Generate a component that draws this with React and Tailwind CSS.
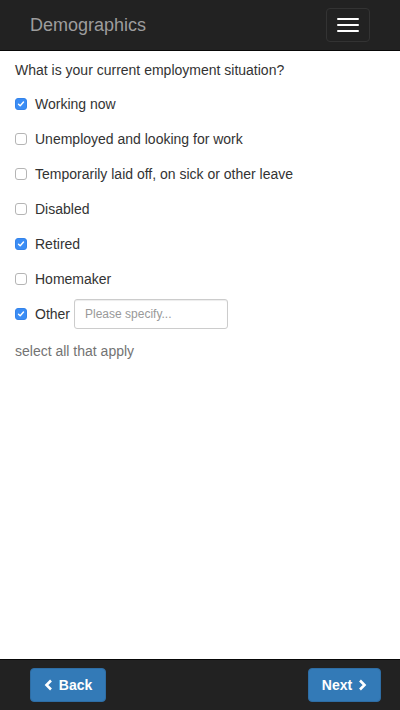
import React, { useState } from 'react';

const options = [
  { label: 'Working now', checked: true },
  { label: 'Unemployed and looking for work', checked: false },
  { label: 'Temporarily laid off, on sick or other leave', checked: false },
  { label: 'Disabled', checked: false },
  { label: 'Retired', checked: true },
  { label: 'Homemaker', checked: false },
];

const Box = ({ checked, onClick }) => (
  <span
    onClick={onClick}
    className={`w-[12px] h-[12px] rounded-[3px] flex items-center justify-center shrink-0 ${
      checked ? 'bg-[#3b8df5] border border-[#3483ea]' : 'bg-white border border-[#b5b5b5]'
    }`}
  >
    {checked && (
      <svg width="8" height="8" viewBox="0 0 8 8">
        <path d="M1.5 4.2 L3.2 5.8 L6.5 2" stroke="white" strokeWidth="1.4" fill="none" strokeLinecap="round" strokeLinejoin="round" />
      </svg>
    )}
  </span>
);

export default function App() {
  const [state, setState] = useState(options.map((o) => o.checked));
  const [other, setOther] = useState(true);

  return (
    <div className="h-[710px] flex flex-col bg-white text-[14px] text-[#333] font-['Liberation_Sans',Arial,sans-serif]">
      {/* Navbar */}
      <div className="h-[51px] shrink-0 bg-[#222] border-b border-[#080808] flex items-center justify-between pl-[30px] pr-[30px]">
        <span className="text-[18px] text-[#9d9d9d]">Demographics</span>
        <button className="w-[44px] h-[34px] border border-[#333] rounded-[4px] flex flex-col items-center justify-center gap-[4px]">
          <span className="block w-[22px] h-[2px] bg-white rounded-[1px]" />
          <span className="block w-[22px] h-[2px] bg-white rounded-[1px]" />
          <span className="block w-[22px] h-[2px] bg-white rounded-[1px]" />
        </button>
      </div>

      {/* Content */}
      <div className="flex-1 px-[15px] pt-[9px]">
        <p className="leading-[20px]">What is your current employment situation?</p>
        <div className="mt-[14px] flex flex-col gap-[15px]">
          {options.map((o, i) => (
            <label key={o.label} className="flex items-center gap-[8px] h-[20px]">
              <Box checked={state[i]} onClick={() => setState(state.map((v, j) => (j === i ? !v : v)))} />
              <span>{o.label}</span>
            </label>
          ))}
          <div className="flex items-center h-[20px]">
            <Box checked={other} onClick={() => setOther(!other)} />
            <span className="ml-[8px]">Other</span>
            <input
              placeholder="Please specify..."
              className="ml-[4px] w-[154px] h-[30px] px-[10px] text-[12px] border border-[#ccc] rounded-[3px] outline-none placeholder:text-[#999] shadow-[inset_0_1px_1px_rgba(0,0,0,0.075)]"
            />
          </div>
        </div>
        <p className="mt-[17px] text-[#737373] leading-[20px]">select all that apply</p>
      </div>

      {/* Footer */}
      <div className="h-[51px] shrink-0 bg-[#222] border-t border-[#080808] flex items-center justify-between pl-[30px] pr-[19px]">
        <button className="h-[34px] w-[76px] bg-[#337ab7] border border-[#2e6da4] rounded-[4px] text-white font-bold flex items-center justify-center gap-[5px]">
          <svg width="10" height="12" viewBox="0 0 10 12">
            <path d="M7 1.5 L2.5 6 L7 10.5" stroke="white" strokeWidth="2.6" fill="none" />
          </svg>
          Back
        </button>
        <button className="h-[34px] w-[73px] bg-[#337ab7] border border-[#2e6da4] rounded-[4px] text-white font-bold flex items-center justify-center gap-[5px]">
          Next
          <svg width="10" height="12" viewBox="0 0 10 12">
            <path d="M3 1.5 L7.5 6 L3 10.5" stroke="white" strokeWidth="2.6" fill="none" />
          </svg>
        </button>
      </div>
    </div>
  );
}
